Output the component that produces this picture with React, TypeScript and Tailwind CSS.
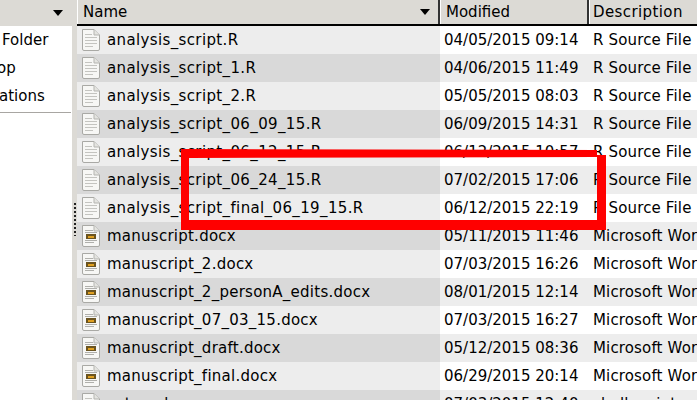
const files = [
  { name: "analysis_script.R", date: "04/05/2015 09:14", kind: "R Source File", icon: "text" },
  { name: "analysis_script_1.R", date: "04/06/2015 11:49", kind: "R Source File", icon: "text" },
  { name: "analysis_script_2.R", date: "05/05/2015 08:03", kind: "R Source File", icon: "text" },
  { name: "analysis_script_06_09_15.R", date: "06/09/2015 14:31", kind: "R Source File", icon: "text" },
  { name: "analysis_script_06_12_15.R", date: "06/12/2015 10:57", kind: "R Source File", icon: "text" },
  { name: "analysis_script_06_24_15.R", date: "07/02/2015 17:06", kind: "R Source File", icon: "text" },
  { name: "analysis_script_final_06_19_15.R", date: "06/12/2015 22:19", kind: "R Source File", icon: "text" },
  { name: "manuscript.docx", date: "05/11/2015 11:46", kind: "Microsoft Word Document", icon: "doc" },
  { name: "manuscript_2.docx", date: "07/03/2015 16:26", kind: "Microsoft Word Document", icon: "doc" },
  { name: "manuscript_2_personA_edits.docx", date: "08/01/2015 12:14", kind: "Microsoft Word Document", icon: "doc" },
  { name: "manuscript_07_03_15.docx", date: "07/03/2015 16:27", kind: "Microsoft Word Document", icon: "doc" },
  { name: "manuscript_draft.docx", date: "05/12/2015 08:36", kind: "Microsoft Word Document", icon: "doc" },
  { name: "manuscript_final.docx", date: "06/29/2015 20:14", kind: "Microsoft Word Document", icon: "doc" },
  { name: "setup.sh", date: "07/03/2015 12:40", kind: "shell script", icon: "text" },
]

function FileIcon({ type }: { type: string }) {
  return (
    <svg width="20" height="24" viewBox="0 0 20 24" className="shrink-0">
      <path d="M1.5 1.5 H13 L18.5 7 V21 Q18.5 22.5 17 22.5 H3 Q1.5 22.5 1.5 21 Z" fill="#f7f7f5" stroke="#a9a9a5" />
      <path d="M13 1.5 V7 H18.5" fill="#e4e4e0" stroke="#b5b5b1" />
      {type === "text" ? (
        <path d="M4 6.5 H11 M4 9.5 H16 M4 12.5 H16 M4 15.5 H16 M4 18.5 H12" stroke="#c4c4c0" />
      ) : (
        <>
          <path d="M4 6.5 H12 M4 8.5 H16 M4 16.5 H16 M4 18.5 H13" stroke="#b0b0ac" />
          <rect x="5" y="10" width="10" height="5" fill="#6b5420" />
          <rect x="7" y="12" width="6" height="2" fill="#e0a020" />
        </>
      )}
    </svg>
  )
}

function SortArrow() {
  return <div className="h-0 w-0 border-x-[5px] border-t-[6px] border-x-transparent border-t-black" />
}

function App() {
  return (
    <div className="flex h-[400px] w-[697px] overflow-hidden bg-[#dcdad5] font-['DejaVu_Sans',sans-serif] text-[15px] text-black relative">
      <div className="w-[72px] shrink-0 flex flex-col">
        <div className="h-[26px] relative shrink-0 flex items-center justify-end pr-[9px]">
          <SortArrow />
        </div>
        <div className="bg-white grow overflow-hidden">
          <div className="h-[28px] leading-[28px] whitespace-nowrap pl-[2px]">Folder</div>
          <div className="h-[28px] leading-[28px] whitespace-nowrap -ml-[3px]">op</div>
          <div className="h-[28px] leading-[28px] whitespace-nowrap -ml-[1px]">ations</div>
          <div className="mt-[2px] h-px w-[71px] bg-[#a8a6a2]" />
        </div>
      </div>
      <div className="w-[5px] shrink-0 relative">
        <div className="absolute left-[2px] top-[203px] flex h-[33px] w-[2px] flex-col gap-[2px] overflow-hidden">
          {Array.from({ length: 9 }, (_, i) => (
            <div key={i} className="h-[2px] w-[2px] shrink-0 bg-[#222]" />
          ))}
        </div>
      </div>
      <div className="grow min-w-0 flex flex-col bg-white">
        <div className="flex h-[26px] shrink-0 border-b-2 border-black bg-[#dcdad5]">
          <div className="flex w-[363px] shrink-0 items-center justify-between border-l border-white pl-[5px] pr-[8px] border-r-2 border-r-[#333]">
            <span>Name</span>
            <SortArrow />
          </div>
          <div className="flex w-[149px] shrink-0 items-center pl-[5px] border-l border-l-white border-r-2 border-r-[#333]">Modified</div>
          <div className="flex grow items-center pl-[3px] border-l border-l-white whitespace-nowrap tracking-[0.4px]">Description</div>
        </div>
        {files.map((f, i) => (
          <div key={f.name} className={i % 2 ? "flex h-[28px] shrink-0 bg-[#ededed]" : "flex h-[28px] shrink-0 bg-white"}>
            <div className={i % 2 ? "flex w-[363px] shrink-0 items-center gap-[6px] bg-[#d9d9d9] pl-[4px]" : "flex w-[363px] shrink-0 items-center gap-[6px] bg-[#ededed] pl-[4px]"}>
              <FileIcon type={f.icon} />
              <span className={f.icon === "text" ? "whitespace-nowrap tracking-[0.37px]" : "whitespace-nowrap tracking-[0.25px]"}>{f.name}</span>
            </div>
            <div className="w-[149px] shrink-0 pl-[4px] leading-[28px] whitespace-nowrap">{f.date}</div>
            <div className="grow min-w-0 overflow-hidden pl-[4px] leading-[28px] whitespace-nowrap tracking-[0.15px]">{f.kind}</div>
          </div>
        ))}
      </div>
      {/* hand drawn red box over the list */}
      <svg width="697" height="400" className="absolute left-0 top-0 pointer-events-none">
        <path
          d="M181 149 L597 150 L597 155 L606 155 L606 230 L181 230 Z M189 158 V220 H597 V157 Z"
          fill="#ff0000"
          fillRule="evenodd"
        />
      </svg>
    </div>
  )
}

export default App
